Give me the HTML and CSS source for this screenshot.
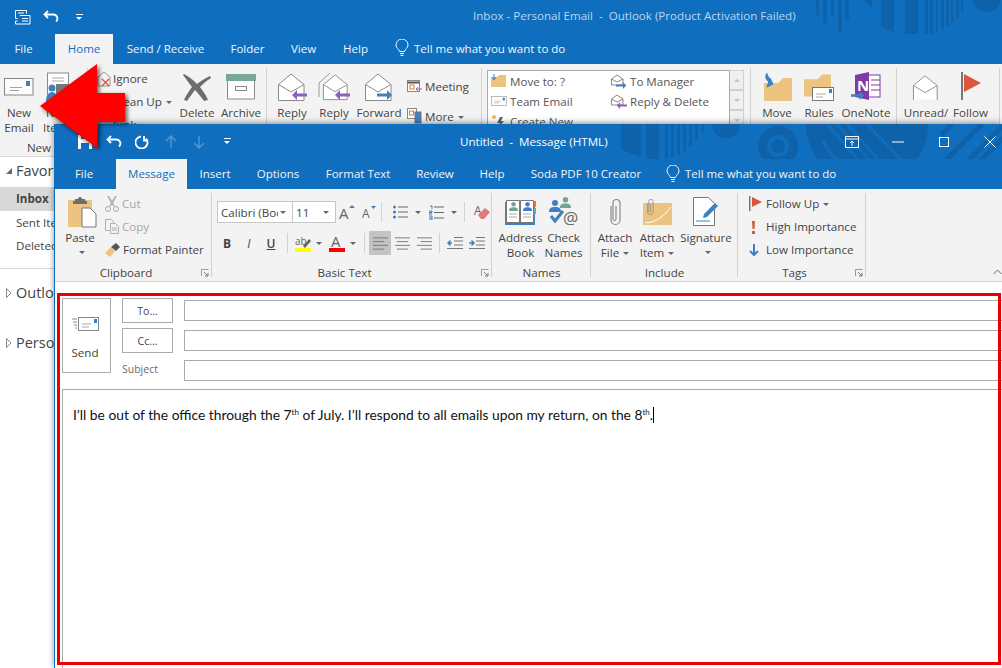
FILE: index.html
```html
<!DOCTYPE html>
<html lang="en">
<head>
<meta charset="utf-8">
<title>Untitled - Message (HTML)</title>
<link rel="stylesheet" href="styles.css">
</head>
<body>
<svg class="sprite" aria-hidden="true">
  <symbol id="mail" viewBox="0 0 30 18"><rect x=".5" y=".5" width="28.5" height="16.5" fill="#fcfcfc" stroke="#868686"/><rect x="22" y="3" width="4" height="5" fill="#3f80c4"/><path d="M6 9.500h12M6 12.500h9" stroke="#a0a0a0"/></symbol>
  <symbol id="openmail" viewBox="0 0 30 30"><path d="M1.500 12.500 14 2l13 10.500v16h-25.500z" fill="#fff" stroke="#8a8a8a"/><path d="M1.500 12.500 14 20l13-7.500" fill="none" stroke="#8a8a8a"/></symbol>
  <symbol id="left-p" viewBox="0 0 16 10"><path d="M6 0 1 5l5 5V6.500h10v-3H6z" fill="#8e62b8"/></symbol>
  <symbol id="right-b" viewBox="0 0 16 10"><path d="M10 0l5 5-5 5V6.500H0v-3h10z" fill="#477fbd"/></symbol>
  <symbol id="folder" viewBox="0 0 28 24"><path d="M0 6h14l5-5h9v23H0z" fill="#edc47f"/></symbol>
  <symbol id="flag" viewBox="0 0 20 30"><rect y="0" width="2" height="28" fill="#777"/><path d="M3 2l17 9-17 9z" fill="#d9583b"/></symbol>
  <symbol id="clip" viewBox="0 0 16 30"><path d="M4 9v14a4.500 4.500 0 0 0 9 0V6a3.500 3.500 0 0 0-7 0v16a1.500 1.500 0 0 0 3 0V9" fill="none" stroke="#8b8b8b" stroke-width="1.200"/></symbol>
  <symbol id="person" viewBox="0 0 12 12"><circle cx="6" cy="3" r="3"/><path d="M0 12c0-4 2-5 6-5s6 1 6 5z"/></symbol>
  <symbol id="lines" viewBox="0 0 16 14"><path d="M0 1.500h16M0 5.500h12M0 9.500h16M0 13.500h12" stroke="#777" fill="none"/></symbol>
  <symbol id="center" viewBox="0 0 16 14"><path d="M0 1.500h16M2 5.500h12M0 9.500h16M2 13.500h12" stroke="#777" fill="none"/></symbol>
  <symbol id="right" viewBox="0 0 16 14"><path d="M0 1.500h16M4 5.500h12M0 9.500h16M4 13.500h12" stroke="#777" fill="none"/></symbol>
  <symbol id="launch" viewBox="0 0 8 8"><path d="M.5 7V.5H7.500" fill="none" stroke="#999"/><path d="M3 3l4 4M7 4v3H4" fill="none" stroke="#777"/></symbol>
  <symbol id="bulb" viewBox="0 0 14 18"><path d="M4.500 12.500C4 10 1 9 1 6a6 6 0 0 1 12 0c0 3-3 4-3.500 6.500z" fill="none" stroke="currentColor"/><path d="M5 14.500h4M5.500 16.500h3" stroke="currentColor"/></symbol>
  <symbol id="tri" viewBox="0 0 6 10"><path d="M.5.500 5 5 .5 9.500z" fill="#fff" stroke="#888"/></symbol>
</svg>

<div class="desktop">
  <section class="win-back">
    <header class="titlebar">
      <svg class="deco" width="1002" height="64" viewBox="0 0 1002 64"><g fill="#0e62a9"><rect x="816" width="3" height="15"/><rect x="823" width="4" height="23"/><rect x="831" width="3" height="16"/><rect x="838" width="4" height="32"/><rect x="845" width="4" height="20"/><path d="M864 0h9l-2 8z"/><path d="M881 0h13v33l-13-7z"/><path d="M905 0h13v37h-13z"/><path d="M925 0h3v36h-3zM930 0h3v34h-3zM936 0h2v33h-2zM941 0h3v29h-3zM946 0h3v26h-3zM951 0h2v23h-2zM956 0h3v18h-3zM961 0h2v12h-2z"/><circle cx="987" cy="-2" r="14"/></g></svg>
      <div class="qat qat-back">
        <span class="qcell"><svg width="16" height="16" viewBox="0 0 16 16"><path d="M.5 1.500h11v3M.5 1.500v8h2M5 6.500h10v8.500H.5v-3h2M3 4h6M7 9.500h6M7 12h6" fill="none" stroke="#fff"/></svg></span>
        <span class="qcell"><svg width="16" height="14" viewBox="0 0 16 14"><path d="M5 1 1.500 4.500 5 8M2 4.500h8a4 4 0 0 1 3 7" fill="none" stroke="#fff" stroke-width="1.800"/></svg></span>
        <span class="qcell"><span class="qc"></span></span>
      </div>
      <div class="title title-back">Inbox - Personal Email &nbsp;- &nbsp;Outlook (Product Activation Failed)</div>
    </header>
    <nav class="tabs tabs-back">
      <span class="tab">File</span><span class="tab tab-on">Home</span><span class="tab">Send / Receive</span><span class="tab">Folder</span><span class="tab">View</span><span class="tab">Help</span>
      <span class="tell tell-back"><svg width="14" height="18"><use href="#bulb"/></svg>Tell me what you want to do</span>
    </nav>
    <div class="ribbon ribbon-back">
      <div class="grp gb-new">
        <div class="gbody">
          <div class="big w38"><span class="ico"><svg width="30" height="18"><use href="#mail"/></svg></span><span class="lb">New<br>Email</span></div>
          <div class="big w40"><span class="ico"><svg width="24" height="30" viewBox="0 0 24 30"><rect x="1.500" y="1" width="21" height="22" fill="#fff" stroke="#8a8a8a"/><path d="M6 6h12M6 9h12" stroke="#aaa"/><rect x="10" y="12" width="14" height="11" fill="#777"/><g fill="#3f80c4"><circle cx="6" cy="16" r="3.500"/><path d="M0 29c0-6 3-9 6-9s6 3 6 9z"/></g></svg></span><span class="lb">New<br>Items</span></div>
        </div>
        <div class="glabel pr10">New</div>
      </div>
      <div class="grp gb-del">
        <div class="gbody">
          <div class="col w78">
            <div class="row"><svg width="14" height="16" viewBox="0 0 14 16"><path d="M1 6 7 1l6 5v9H1z" fill="none" stroke="#999"/><path d="M5 8l7 7M12 8l-7 7" stroke="#d4552f" stroke-width="1.300"/></svg><span>Ignore</span></div>
            <div class="row"><svg width="14" height="14"></svg><span>Clean Up<i class="caret"></i></span></div>
            <div class="row"><svg width="14" height="14"></svg><span>Junk<i class="caret"></i></span></div>
          </div>
          <div class="big w44"><span class="ico"><svg width="32" height="30" viewBox="0 0 32 30"><path d="M3 2c6 3 10 7 13 10 4-3 8-6 13-8l1 2c-5 3-8 6-11 9 3 4 6 8 8 13l-4 1c-3-4-6-8-9-11-3 4-6 8-8 11l-3-1c2-5 5-9 8-13C8 11 5 7 2 3z" fill="#6e6e6e"/></svg></span><span class="lb">Delete</span></div>
          <div class="big w44"><span class="ico"><svg width="30" height="26" viewBox="0 0 30 26"><rect width="30" height="7" fill="#7aa898"/><path d="M1.500 7v18h27V7" fill="#fff" stroke="#8a8a8a"/><rect x="9.500" y="12.500" width="11" height="4" fill="none" stroke="#8a8a8a"/></svg></span><span class="lb">Archive</span></div>
        </div>
      </div>
      <div class="grp gb-res">
        <div class="gbody">
          <div class="big w42"><span class="ico"><svg width="30" height="30" viewBox="0 0 30 30"><use href="#openmail" width="30" height="30"/><use href="#left-p" x="14" y="18" width="16" height="10"/></svg></span><span class="lb">Reply</span></div>
          <div class="big w42"><span class="ico"><svg width="32" height="30" viewBox="0 0 32 30"><path d="M1 11v14M1 11 12 1" fill="none" stroke="#9a9a9a"/><use href="#openmail" x="4" width="28" height="30"/><use href="#left-p" x="16" y="18" width="16" height="10"/></svg></span><span class="lb">Reply</span></div>
          <div class="big w48"><span class="ico"><svg width="30" height="30" viewBox="0 0 30 30"><use href="#openmail" width="30" height="30"/><use href="#right-b" x="13" y="18" width="16" height="10"/></svg></span><span class="lb">Forward</span></div>
          <div class="col col30 w72">
            <div class="row"><svg width="15" height="14" viewBox="0 0 15 14"><rect x=".5" y="1.500" width="12" height="11" fill="#fff" stroke="#888"/><path d="M.5 3.500h12" stroke="#555" stroke-width="2"/><rect x="3" y="6" width="4" height="4" fill="none" stroke="#e87722"/><path d="M9 10h6M11 8l-2 2 2 2" stroke="#8e62b8" fill="none"/></svg><span>Meeting</span></div>
            <div class="row"><svg width="15" height="16" viewBox="0 0 15 16"><rect x=".5" y=".5" width="9" height="10" fill="#fff" stroke="#888"/><rect x="2.500" y="3" width="4" height="4" fill="none" stroke="#e87722"/><rect x="8" y="4" width="6" height="11" fill="#3f80c4" stroke="#777"/></svg><span>More<i class="caret"></i></span></div>
          </div>
        </div>
      </div>
      <div class="grp gb-qs">
        <div class="qsbox">
          <div class="qscol">
            <div class="qsrow"><svg width="16" height="14" viewBox="0 0 16 14"><path d="M0 3h6l2-2h7v12H0z" fill="#edc47f"/><path d="M3 0v5M1 3l2 3 2-3" stroke="#3f80c4" fill="none"/></svg>Move to: ?</div>
            <div class="qsrow"><svg width="16" height="12"><use href="#mail"/></svg>Team Email</div>
            <div class="qsrow"><svg width="16" height="14" viewBox="0 0 16 14"><path d="M9 3 6 9h3l-2 5 6-7h-3l2-4z" fill="#666"/><circle cx="3" cy="3" r="2" fill="#f0b94a"/></svg>Create New</div>
          </div>
          <div class="qscol">
            <div class="qsrow"><svg width="16" height="16" viewBox="0 0 16 16"><path d="M.5 6 6 2l6 4v6H.5z" fill="#fff" stroke="#888"/><path d="M.5 6 6 9l6-3" fill="none" stroke="#888"/><use href="#right-b" x="5" y="9" width="11" height="7"/></svg>To Manager</div>
            <div class="qsrow"><svg width="16" height="16" viewBox="0 0 16 16"><path d="M.5 6 6 2l6 4v6H.5z" fill="#fff" stroke="#888"/><path d="M.5 6 6 9l6-3" fill="none" stroke="#888"/><use href="#left-p" x="5" y="9" width="11" height="7"/></svg>Reply &amp; Delete</div>
          </div>
        </div>
        <div class="qsscroll"><span class="sb"><i class="up"></i></span><span class="sb"><i class="down"></i></span><span class="sb"><i class="down"></i></span></div>
      </div>
      <div class="grp gb-mv">
        <div class="gbody">
          <div class="big w44"><span class="ico"><svg width="30" height="28" viewBox="0 0 30 28"><use href="#folder" x="2" y="4" width="28" height="24"/><path d="M5 0c-3 5 0 9 5 10M5 14l6-3-3-6z" fill="#3f80c4" stroke="#3f80c4"/></svg></span><span class="lb">Move</span></div>
          <div class="big w40"><span class="ico"><svg width="30" height="28" viewBox="0 0 30 28"><use href="#folder" width="27" height="24"/><rect x="8.500" y="14.500" width="21" height="13" fill="#fff" stroke="#777"/><rect x="25" y="16" width="3" height="4" fill="#3f80c4"/><path d="M12 21h10M12 24h7" stroke="#aaa"/></svg></span><span class="lb">Rules</span></div>
          <div class="big w54"><span class="ico"><svg width="30" height="30" viewBox="0 0 30 30"><rect x="14" y="3" width="15" height="22" fill="#fff" stroke="#7d3aa8"/><path d="M4 3 18 0v28L4 25z" fill="#7d3aa8"/><text x="6" y="19" class="on">N</text><path d="M20 8h9M20 13h9M20 18h9" stroke="#7d3aa8"/><use href="#right-b" y="19" width="14" height="9"/></svg></span><span class="lb">OneNote</span></div>
        </div>
      </div>
      <div class="grp gb-tag">
        <div class="gbody">
          <div class="big w50"><span class="ico"><svg width="28" height="26" viewBox="0 0 30 28"><use href="#openmail" width="30" height="30"/></svg></span><span class="lb">Unread/</span></div>
          <div class="big w39"><span class="ico"><svg width="20" height="30"><use href="#flag"/></svg></span><span class="lb">Follow</span></div>
        </div>
      </div>
    </div>
    <aside class="nav">
      <div class="nav-head"><i class="tri-solid"></i>Favorites</div>
      <div class="nav-item nav-on">Inbox</div>
      <div class="nav-item">Sent Items</div>
      <div class="nav-item">Deleted Items</div>
      <div class="nav-acc nav-first"><svg width="6" height="10"><use href="#tri"/></svg>Outlook</div>
      <div class="nav-acc"><svg width="6" height="10"><use href="#tri"/></svg>Personal</div>
    </aside>
  </section>

  <section class="win-front">
    <header class="titlebar titlebar-front">
      <svg class="deco" width="948" height="65" viewBox="54 124 948 65"><g fill="#0e62a9"><path d="M620 124h20v33q-10-3-20-8z"/><path d="M645 124h13v38h-13z"/><path d="M664 124h3v35h-3zM670 124h3v33h-3zM676 124h3v31h-3zM682 124h3v27h-3zM688 124h3v22h-3zM694 124h3v16h-3zM700 124h3v8h-3z"/><path d="M711 124h28a14 14 0 0 1-28 0z"/><path d="M777 126a20 20 0 1 0 .01 0zm0 9a11 11 0 1 1-.01 0z" fill-rule="evenodd"/><circle cx="777" cy="146" r="7"/><path d="M805 124h122c0 30-20 53-50 53h-20c-30 0-52-23-52-53z"/></g><g stroke="#106ebe" stroke-width="2.500"><path d="M826 124l43 50M836 124l45 50M846 124l44 50M866 124l40 42"/></g><path d="M822 140q10 25 35 30" fill="none" stroke="#106ebe" stroke-width="3"/><g stroke="#0e62a9" stroke-width="5"><path d="M940 135l11-11M945 160l36-36M958 170l44-44M975 165l27-27"/></g></svg>
      <div class="qat qat-front">
        <span class="qcell"><svg width="16" height="16" viewBox="0 0 16 16"><path d="M1 1h11l3 3v11H1z" fill="#fff"/><rect x="4" y="1" width="7" height="4" fill="#106ebe"/><rect x="4" y="9" width="8" height="6" fill="#106ebe"/></svg></span>
        <span class="qcell"><svg width="16" height="14" viewBox="0 0 16 14"><path d="M5 1 1.500 4.500 5 8M2 4.500h8a4 4 0 0 1 3 7" fill="none" stroke="#fff" stroke-width="1.800"/></svg></span>
        <span class="qcell"><svg width="14" height="14" viewBox="0 0 14 14"><path d="M9 1v4.500h4M11 3.500A6 6 0 1 1 6 1.500" fill="none" stroke="#fff" stroke-width="1.800"/></svg></span>
        <span class="qcell"><svg width="12" height="14" viewBox="0 0 12 14"><path d="M6 1v12M1 6l5-5 5 5" fill="none" stroke="#4e96d2" stroke-width="1.500"/></svg></span>
        <span class="qcell"><svg width="12" height="14" viewBox="0 0 12 14"><path d="M6 13V1M1 8l5 5 5-5" fill="none" stroke="#4e96d2" stroke-width="1.500"/></svg></span>
        <span class="qcell"><span class="qc"></span></span>
      </div>
      <div class="title">Untitled &nbsp;- &nbsp;Message (HTML)</div>
      <div class="ctrls">
        <span class="ctrl"><svg width="14" height="12" viewBox="0 0 14 12"><path d="M.5.500h13v11H.5zM.5 3h13M7 10V5M5 7l2-2 2 2" fill="none" stroke="#fff"/></svg></span>
        <span class="ctrl"><svg width="12" height="2"><path d="M0 1h12" stroke="#fff"/></svg></span>
        <span class="ctrl"><svg width="10" height="10"><rect x=".5" y=".5" width="9" height="9" fill="none" stroke="#fff"/></svg></span>
        <span class="ctrl"><svg width="12" height="12"><path d="M.5.500l11 11M11.500.5l-11 11" stroke="#fff"/></svg></span>
      </div>
    </header>
    <nav class="tabs tabs-front">
      <span class="tab">File</span><span class="tab tab-on">Message</span><span class="tab">Insert</span><span class="tab">Options</span><span class="tab">Format Text</span><span class="tab">Review</span><span class="tab">Help</span><span class="tab">Soda PDF 10 Creator</span>
      <span class="tell tell-front"><svg width="14" height="18"><use href="#bulb"/></svg>Tell me what you want to do</span>
    </nav>
    <div class="ribbon ribbon-front">
      <div class="grp gf-clip">
        <div class="gbody">
          <div class="big w50"><span class="ico"><svg class="paste-ic" width="30" height="32" viewBox="0 0 30 32"><path d="M1 4h24v27H1z" fill="#edc47f"/><path d="M8 5V3h3a2 2 0 0 1 4 0h3v2h2v3H6V5z" fill="#6e6e6e"/><path d="M15 12h8l6 6v13H15z" fill="#fff" stroke="#777"/></svg></span><span class="lb">Paste</span><i class="caret bc"></i></div>
          <div class="col">
            <div class="row off"><svg width="14" height="16" viewBox="0 0 14 16"><path d="M3 0l6 10M11 0 5 10" stroke="#aaa" stroke-width="1.500"/><circle cx="3" cy="13" r="2.500" fill="none" stroke="#aaa"/><circle cx="11" cy="13" r="2.500" fill="none" stroke="#aaa"/></svg><span>Cut</span></div>
            <div class="row off"><svg width="14" height="15" viewBox="0 0 14 15"><path d="M.5.500h6l2 2v9H.5z" fill="none" stroke="#b0b0b0"/><path d="M5.500 4.500h5l3 3v7h-8z" fill="#f3f3f3" stroke="#b0b0b0"/><path d="M7 9h5M7 11h5" stroke="#b0b0b0"/></svg><span>Copy</span></div>
            <div class="row"><svg width="15" height="14" viewBox="0 0 15 14"><path d="M0 10l6-6 4 4-5 6z" fill="#edc47f"/><path d="M6 4l5-4 4 4-4 4z" fill="#555"/></svg><span>Format Painter</span></div>
          </div>
        </div>
        <div class="glabel pr15">Clipboard</div>
        <svg class="launch" width="8" height="8"><use href="#launch"/></svg>
      </div>
      <div class="grp gf-text">
        <div class="gbody column">
          <div class="tbrow r1">
            <span class="combo cb-font"><span class="cbt">Calibri (Body)</span><i class="caret"></i></span>
            <span class="combo cb-size"><span class="cbt">11</span><i class="caret"></i></span>
            <span class="tb w22"><svg width="16" height="14" viewBox="0 0 16 14"><text x="0" y="14" class="ag">A</text><path d="M10 3l3-3 3 3z" fill="#3f80c4"/></svg></span>
            <span class="tb w22"><svg width="14" height="12" viewBox="0 0 14 12"><text x="0" y="12" class="ags">A</text><path d="M9 0l2.500 3L14 0z" fill="#3f80c4"/></svg></span>
            <i class="vs vs2"></i>
            <span class="tb w26"><svg width="15" height="14" viewBox="0 0 15 14"><path d="M5 2h10M5 7h10M5 12h10" stroke="#666"/><g fill="#3f80c4"><circle cx="1.500" cy="2" r="1.500"/><circle cx="1.500" cy="7" r="1.500"/><circle cx="1.500" cy="12" r="1.500"/></g></svg></span>
            <i class="caret tc"></i>
            <span class="tb w26"><svg width="15" height="15" viewBox="0 0 15 15"><path d="M5 2h10M5 7.500h10M5 13h10" stroke="#666"/><path d="M1 1h2v3M0 6h3v1.500H0V9h3M0 11h3v4H0M0 13h3" fill="none" stroke="#3f80c4"/></svg></span>
            <i class="caret tc"></i>
            <i class="vs"></i>
            <span class="tb w24"><svg width="16" height="15" viewBox="0 0 16 15"><text x="0" y="10" class="ags">A</text><path d="M4 10l7-7 5 4-6 7H7z" fill="#e27a7a"/></svg></span>
          </div>
          <div class="tbrow r2">
            <span class="tb w22 bold">B</span><span class="tb w22 ital">I</span><span class="tb w22 under">U</span>
            <i class="vs"></i>
            <span class="tb w16"><svg width="16" height="17" viewBox="0 0 16 17"><text x="0" y="10" class="abt">ab</text><path d="M8 11l6-7 2 2-6 7z" fill="#666"/><rect y="13" width="16" height="4" fill="#ff0"/></svg></span>
            <i class="caret tc2"></i>
            <span class="tb w16"><svg width="16" height="17" viewBox="0 0 16 17"><text x="2" y="12" class="ag">A</text><rect y="13" width="16" height="4" fill="#f00"/></svg></span>
            <i class="caret tc3"></i>
            <i class="vs vs4"></i>
            <span class="tb w22 active"><svg width="15" height="14"><use href="#lines"/></svg></span>
            <span class="tb w22"><svg width="15" height="14"><use href="#center"/></svg></span>
            <span class="tb w22"><svg width="15" height="14"><use href="#right"/></svg></span>
            <i class="vs vs4"></i>
            <span class="tb w22"><svg width="16" height="14" viewBox="0 0 16 14"><path d="M7 1.500h9M7 5h9M7 9h9M0 12.500h16" stroke="#777"/><path d="M5 7H2M3.500 4.500 1 7l2.500 2.500" fill="none" stroke="#3f80c4" stroke-width="1.500"/></svg></span>
            <span class="tb w22"><svg width="16" height="14" viewBox="0 0 16 14"><path d="M7 1.500h9M7 5h9M7 9h9M0 12.500h16" stroke="#777"/><path d="M0 7h4M2.500 4.500 5 7 2.500 9.500" fill="none" stroke="#3f80c4" stroke-width="1.500"/></svg></span>
          </div>
        </div>
        <div class="glabel pr15">Basic Text</div>
        <svg class="launch" width="8" height="8"><use href="#launch"/></svg>
      </div>
      <div class="grp gf-names">
        <div class="gbody">
          <div class="big w43"><span class="ico"><svg width="32" height="26" viewBox="0 0 32 26"><path d="M0 3h30v23H0z" fill="#3f80c4"/><path d="M1.500 1.500h13v22h-13zM15.500 1.500h13v22h-13z" fill="#fff" stroke="#777"/><rect x="29" y="2" width="2" height="6" fill="#e07a3a"/><rect x="29" y="9" width="2" height="6" fill="#7aa898"/><use href="#person" x="4" y="3" width="9" height="9" fill="#6fa592"/><use href="#person" x="18" y="3" width="9" height="9" fill="#3f80c4"/><path d="M4 15h8M4 18h8M18 15h8M18 18h8" stroke="#aaa"/></svg></span><span class="lb">Address<br>Book</span></div>
          <div class="big w43"><span class="ico"><svg width="32" height="30" viewBox="0 0 32 30"><use href="#person" x="1" y="3" width="12" height="12" fill="#3f80c4"/><use href="#person" x="12" y="0" width="11" height="11" fill="#6fa592"/><path d="M3 19l4 5 8-10" fill="none" stroke="#3f80c4" stroke-width="3"/><text x="15" y="27" class="at">@</text></svg></span><span class="lb">Check<br>Names</span></div>
        </div>
        <div class="glabel">Names</div>
      </div>
      <div class="grp gf-inc">
        <div class="gbody">
          <div class="big w48"><span class="ico"><svg width="16" height="30"><use href="#clip"/></svg></span><span class="lb">Attach<br>File<i class="caret"></i></span></div>
          <div class="big w36"><span class="ico"><svg width="29" height="26" viewBox="0 0 29 26"><rect y="4" width="29" height="22" fill="#edc47f"/><path d="M2 24q14 0 26-16" fill="none" stroke="#fff"/><use href="#clip" x="2" y="-2" width="10" height="20"/></svg></span><span class="lb">Attach<br>Item<i class="caret"></i></span></div>
          <div class="big w62"><span class="ico"><svg width="28" height="30" viewBox="0 0 28 30"><path d="M1.500.5h15l6 6v22h-21z" fill="#fff" stroke="#777"/><path d="M4 24h14" stroke="#3f80c4"/><path d="M11 21l1-4 11-11 3 3-11 11z" fill="#3f80c4"/></svg></span><span class="lb">Signature</span><i class="caret bc"></i></div>
        </div>
        <div class="glabel">Include</div>
      </div>
      <div class="grp gf-tags">
        <div class="gbody">
          <div class="col">
            <div class="row"><svg width="14" height="15" viewBox="0 0 14 15"><rect width="1.500" height="15" fill="#777"/><path d="M3 1l10 5-10 5z" fill="#d9583b"/></svg><span>Follow Up<i class="caret"></i></span></div>
            <div class="row"><svg width="14" height="14" viewBox="0 0 14 14"><path d="M3 1h3l-.5 8h-2zM3 11h3v3H3z" fill="#d9583b"/></svg><span>High Importance</span></div>
            <div class="row"><svg width="14" height="14" viewBox="0 0 14 14"><path d="M5 1v11M1 8l4 4 4-4" fill="none" stroke="#3f80c4" stroke-width="2"/></svg><span>Low Importance</span></div>
          </div>
        </div>
        <div class="glabel pr15">Tags</div>
        <svg class="launch" width="8" height="8"><use href="#launch"/></svg>
      </div>
      <svg class="collapse" width="9" height="6"><path d="M.5 5 4.500 1l4 4" fill="none" stroke="#666"/></svg>
    </div>
    <main class="compose">
      <div class="headers">
        <div class="send"><svg width="27" height="14" viewBox="0 0 27 14"><path d="M0 2h5M1 5h4M2 8h3M3 11h2" stroke="#888"/><rect x="6.500" y=".5" width="20" height="13" fill="#fff" stroke="#868686"/><rect x="22" y="2" width="3" height="4" fill="#3f80c4"/><path d="M10 7h9M10 10h7" stroke="#aaa"/></svg><span>Send</span></div>
        <div class="hbtn">To...</div><div class="hfield"></div>
        <div class="hbtn">Cc...</div><div class="hfield"></div>
        <div class="hsub">Subject</div><div class="hfield"></div>
      </div>
      <div class="body-box"><p class="msg">I’ll be out of the office through the 7<sup>th</sup> of July. I’ll respond to all emails upon my return, on the 8<sup>th</sup>.<i class="cursor"></i></p></div>
      <div class="redbox"></div>
    </main>
  </section>

  <svg class="arrow" width="140" height="160" viewBox="0 0 140 160"><path d="M40 106 97 64v29h28v29H98l-1 26z" fill="#f00"/></svg>
</div>
</body>
</html>
```

FILE: styles.css
```css
* { box-sizing: border-box; }
html, body { margin: 0; padding: 0; }
body { width: 1002px; height: 668px; overflow: hidden; font-family: "Open Sans", "Liberation Sans", sans-serif; font-size: 11.6px; color: #444; background: #fff; }
.sprite { position: absolute; width: 0; height: 0; }
.desktop { position: relative; width: 1002px; height: 668px; overflow: hidden; }
i { display: inline-block; font-style: normal; }

.titlebar { position: relative; display: flex; align-items: center; height: 34px; background: #106ebe; }
.titlebar-front { height: 35px; }
.deco { position: absolute; left: 0; top: 0; }
.qat, .title, .ctrls { position: relative; }
.qat { display: flex; align-items: center; flex: none; }
.qat-back { width: 473px; padding-left: 8.5px; }
.qat-front { width: 405px; padding-left: 16px; }
.qcell { display: flex; align-items: center; justify-content: center; width: 28.5px; height: 20px; }
.qc { display: block; width: 7px; height: 7px; border-top: 1px solid #fff; position: relative; }
.qc::after { content: ""; position: absolute; left: 0; top: 2px; border: 3.5px solid transparent; border-top-color: #fff; border-bottom: 0; }
.title { color: #fff; font-size: 11.6px; white-space: nowrap; }
.title-back { color: #b9d6ef; margin-top: -3px; }
.ctrls { display: flex; margin-left: auto; margin-right: -11px; }
.ctrl { display: flex; width: 46px; justify-content: center; align-items: center; height: 24px; }

.tabs { display: grid; align-items: stretch; height: 30px; background: #106ebe; color: #f1f6fb; font-size: 11.5px; position: relative; }
.tabs-back { grid-template-columns: 55px 58px 105px 59px 53px 51px auto; }
.tabs-front { grid-template-columns: 61px 71px 56px 70px 90px 64px 50px 138px auto; }
.tab { display: flex; align-items: center; justify-content: center; white-space: nowrap; padding-bottom: 1px; }
.tabs-back .tab { padding-bottom: 2px; }
.tabs-back .tab:first-child { padding-right: 8px; }
.tabs-front .tab:first-child { padding-right: 3px; }
.tab-on { background: #f3f3f3; color: #106ebe; }
.tell { display: flex; align-items: center; gap: 5px; white-space: nowrap; padding-bottom: 1px; }
.tell-back { margin-left: 14px; padding-bottom: 2px; }
.tell-front { margin-left: 11px; }

.ribbon { display: flex; height: 92px; background: #f3f3f3; position: relative; }
.grp { position: relative; display: flex; flex-direction: column; flex: none; padding-top: 4px; }
.grp::after { content: ""; position: absolute; right: 0; top: 4px; bottom: 4px; width: 1px; background: #d2d2d2; }
.gbody { display: flex; flex: 1; min-height: 0; }
.gbody.column { flex-direction: column; }
.glabel { height: 16px; line-height: 16px; text-align: center; white-space: nowrap; }
.pr10 { padding-right: 10px; }
.pr15 { padding-right: 15px; }
.launch { position: absolute; right: 3px; bottom: 4px; }
.collapse { position: absolute; right: 0; bottom: 6px; }

.big { display: flex; flex-direction: column; align-items: center; flex: none; }
.ico { display: flex; align-items: center; justify-content: center; height: 37px; flex: none; }
.paste-ic { margin-left: 3px; }
.lb { display: block; line-height: 15px; text-align: center; white-space: nowrap; }
.bc { margin-top: 6px; }
.w36 { width: 36px; } .w38 { width: 38px; } .w39 { width: 39px; } .w40 { width: 40px; } .w42 { width: 42px; } .w43 { width: 43px; }
.w44 { width: 44px; } .w48 { width: 48px; } .w50 { width: 50px; } .w54 { width: 54px; } .w62 { width: 62px; } .w72 { width: 72px; } .w78 { width: 78px; }
.col { display: flex; flex-direction: column; flex: none; margin-top: -1px; }
.row { display: flex; align-items: center; gap: 3px; height: 23px; white-space: nowrap; }
.row svg { flex: none; }
.col30 { margin: 0 0 0 4px; padding-top: 3px; }
.col30 .row { height: 30px; }
.off { color: #a6a6a6; }
.caret { width: 0; height: 0; border: 3px solid transparent; border-top-color: #666; border-bottom: 0; margin-left: 4px; vertical-align: middle; flex: none; }

.gb-new { width: 88px; }
.gb-del { width: 179px; padding-left: 9px; }
.gb-del .row { gap: 2px; }
.gb-res { width: 215px; padding-left: 4px; }
.gb-qs { width: 269px; padding: 6px 0 0 5px; flex-direction: row; }
.gb-mv { width: 146px; padding-left: 4px; }
.gb-tag { width: 103px; padding-left: 4px; }
.qsbox { display: flex; width: 243px; height: 80px; background: #fff; border: 1px solid #ababab; padding: 0 0 0 3px; }
.qscol { width: 120px; flex: none; }
.qsrow { display: flex; align-items: center; gap: 3px; height: 20px; font-size: 11.6px; color: #555; white-space: nowrap; }
.qsscroll { display: flex; flex-direction: column; width: 14px; flex: none; }
.sb { display: flex; align-items: center; justify-content: center; height: 20px; background: #f0f0f0; border: 1px solid #d0d0d0; border-left: 0; }
.up { border: 3.5px solid transparent; border-bottom-color: #c4c4c4; border-top: 0; }
.down { border: 3.5px solid transparent; border-top-color: #c4c4c4; border-bottom: 0; }

.nav { width: 54px; border-top: 1px solid #d6d6d6; white-space: nowrap; overflow: hidden; color: #444; height: 512px; background: #fff; }
.nav-head { display: flex; align-items: center; height: 30px; padding: 0 0 3px 6px; font-size: 14.5px; gap: 4px; }
.nav-item { display: flex; align-items: center; height: 23.5px; padding-left: 16px; font-size: 11.6px; }
.nav-on { background: #d9d9d9; font-weight: 700; }
.nav-acc { display: flex; align-items: center; gap: 4px; font-size: 14.5px; height: 24px; padding-left: 6px; }
.nav-acc svg { flex: none; }
.nav-first { position: relative; margin-top: 23px; }
.nav-first::before { content: ""; position: absolute; left: 0; width: 54px; top: -13px; height: 1px; background: #d6d6d6; }
.nav-acc + .nav-acc { margin-top: 26px; }
.tri-solid { width: 0; height: 0; flex: none; border-style: solid; border-width: 0 0 6px 6px; border-color: transparent transparent #666 transparent; }

.win-front { position: absolute; left: 54px; top: 124px; width: 948px; height: 544px; background: #fff; border-left: 1px solid #106ebe; box-shadow: 0 -1px 6px rgba(0, 0, 0, .45); }
.gf-clip { width: 157px; }
.gf-text { width: 280px; }
.gf-names { width: 99px; padding-left: 7px; }
.gf-inc { width: 147px; padding-left: 0; }
.gf-tags { width: 128px; padding-left: 11px; }
.gf-names .glabel { padding-right: 7px; }
.gf-tags .glabel { padding-right: 26px; }

.tbrow { display: flex; align-items: center; }
.r1 { height: 22px; margin-top: 8px; padding-left: 5px; }
.r2 { height: 24px; margin-top: 8px; padding-left: 4px; }
.combo { display: flex; align-items: center; height: 22px; background: #fff; border: 1px solid #c6c6c6; padding-left: 3px; flex: none; }
.cb-font { width: 76px; }
.cb-size { width: 43px; border-left: 0; }
.cbt { flex: 1; overflow: hidden; white-space: nowrap; font-size: 11.6px; color: #444; }
.cb-font .cbt { width: 53px; }
.combo .caret { margin: 0 6px 0 2px; }
.tb { display: flex; align-items: center; justify-content: center; height: 24px; flex: none; }
.w16 { width: 20px; } .w22 { width: 22px; } .w24 { width: 24px; } .w26 { width: 26px; }
.vs { width: 1px; height: 20px; background: #d2d2d2; margin: 0 5px; flex: none; }
.vs2 { margin-left: 1px; }
.vs4 { margin: 0 4px; }
.tc { margin: 0 2px; }
.tc2 { margin: 0 5px 0 3px; }
.tc3 { margin: 0 4px 0 3px; }
.active { background: #c3c3c3; }
.bold { font-weight: 700; font-size: 12px; }
.ital { font-style: italic; font-size: 12px; }
.under { text-decoration: underline; font-size: 12px; font-weight: 600; }
.ag { font: 15px "Open Sans", sans-serif; fill: #666; }
.ags { font: 12px "Open Sans", sans-serif; fill: #666; }
.abt { font: 10px "Open Sans", sans-serif; fill: #666; }
.at { font: 17px "Open Sans", sans-serif; fill: #666; }
.on { font: 700 15px "Open Sans", sans-serif; fill: #fff; }

.compose { position: relative; height: 387px; padding: 16px 0 0 7px; overflow: hidden; border-top: 1px solid #d4d4d4; }
.headers { display: grid; grid-template-columns: 49px 51px 900px; column-gap: 11px; grid-template-rows: 30px 30px 31px; }
.send { grid-row: 1 / 4; height: 75px; border: 1px solid #ababab; display: flex; flex-direction: column; align-items: center; justify-content: flex-end; gap: 14px; padding: 0 3px 12px 0; }
.hbtn { height: 25px; border: 1px solid #ababab; display: flex; align-items: center; justify-content: center; font-size: 10.5px; }
.hfield { height: 21px; margin-top: 2px; border: 1px solid #ababab; }
.hsub { font-size: 10.5px; line-height: 22px; color: #6b6b6b; }
.body-box { width: 1000px; height: 300px; border: 1px solid #ababab; padding: 17px 0 0 10px; }
.msg { margin: 0; font-family: Lato, "Open Sans", sans-serif; font-size: 13.8px; line-height: 16px; color: #111; white-space: nowrap; }
.msg sup { font-size: 8px; line-height: 0; vertical-align: 5px; }
.cursor { width: 1px; height: 16px; background: #000; vertical-align: -3px; }
.redbox { position: absolute; left: 2px; top: 11px; width: 944px; height: 372px; border: 3px solid #ea0000; }

.arrow { position: absolute; left: 0; top: 0; filter: drop-shadow(2px 2px 2px rgba(0, 0, 0, .65)); }
```
